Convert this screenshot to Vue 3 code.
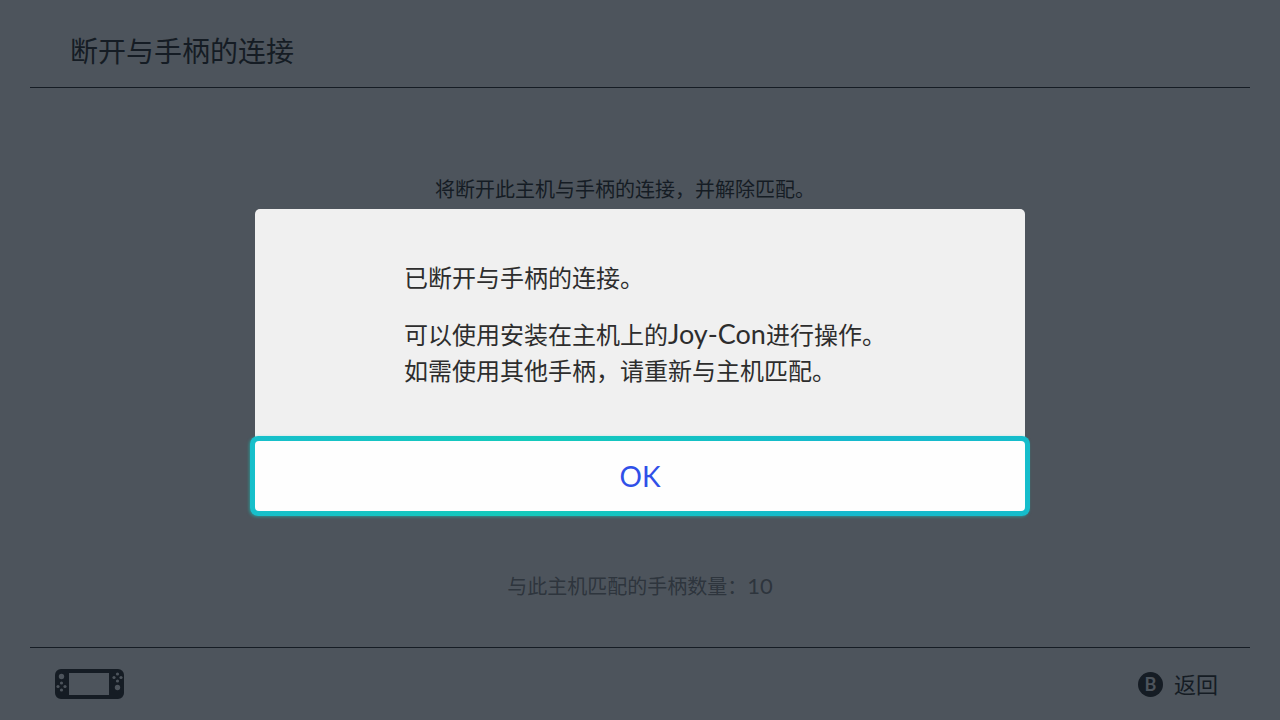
<script setup>
import { ref, onMounted } from 'vue'

const pairedCount = 10
const okButton = ref(null)
onMounted(() => okButton.value.focus())
</script>

<template>
  <div class="screen">
    <header class="top">
      <h1>断开与手柄的连接</h1>
    </header>
    <main class="content">
      <p class="notice">将断开此主机与手柄的连接，并解除匹配。</p>
      <p class="count">与此主机匹配的手柄数量：<span class="number">{{ pairedCount }}</span></p>
    </main>
    <footer class="bottom">
      <svg class="console" viewBox="0 0 70 30" width="70" height="30" aria-hidden="true">
        <path
          fill="#151c24"
          fill-rule="evenodd"
          d="M6 0H63a6 6 0 0 1 6 6V24a6 6 0 0 1-6 6H6a6 6 0 0 1-6-6V6a6 6 0 0 1 6-6ZM14 4V26H54V4Z"
        />
        <g fill="#4d545c">
          <circle cx="6.5" cy="7.5" r="2.7" />
          <circle cx="6.5" cy="14" r="1.6" />
          <circle cx="6.5" cy="21" r="1.6" />
          <circle cx="3" cy="17.5" r="1.6" />
          <circle cx="10" cy="17.5" r="1.6" />
          <circle cx="62.5" cy="18.5" r="2.7" />
          <circle cx="62.5" cy="5" r="1.6" />
          <circle cx="62.5" cy="12" r="1.6" />
          <circle cx="59" cy="8.5" r="1.6" />
          <circle cx="66" cy="8.5" r="1.6" />
        </g>
      </svg>
      <button class="back" type="button"><span class="key">B</span><span class="back-label">返回</span></button>
    </footer>

    <div class="overlay">
      <section class="dialog" role="alertdialog" aria-modal="true" aria-labelledby="dialog-title" aria-describedby="dialog-text">
        <div class="message">
          <p id="dialog-title">已断开与手柄的连接。</p>
          <p id="dialog-text">可以使用安装在主机上的<span class="latin">Joy-Con</span>进行操作。<br />如需使用其他手柄，请重新与主机匹配。</p>
        </div>
        <button ref="okButton" class="ok" type="button"><span class="ok-label">OK</span></button>
      </section>
    </div>
  </div>
</template>

<style>
body {
  background: #4d545c;
}
</style>

<style scoped>
.screen {
  box-sizing: border-box;
  min-height: 100vh;
  padding: 0 30px;
  display: flex;
  flex-direction: column;
  background: #4d545c;
  color: #151c24;
  font-family: "Noto Sans CJK SC", sans-serif;
}

h1,
p {
  margin: 0;
  font-weight: 400;
}

.top {
  padding: 16px 40px 0;
  height: 71px;
  border-bottom: 1px solid #151c24;
}

h1 {
  font-size: 28px;
  line-height: 68px;
}

.content {
  flex: 1;
  display: flex;
  flex-direction: column;
  align-items: center;
  justify-content: space-between;
  padding: 86px 0 46px;
}

.notice,
.count {
  font-size: 20px;
  line-height: 30px;
}

.notice {
  width: 410px;
}

.count {
  color: #2e353d;
}

.number {
  font-family: Lato, sans-serif;
  font-size: 22px;
}

.bottom {
  display: flex;
  align-items: center;
  justify-content: space-between;
  height: 72px;
  padding: 0 32px 0 25px;
  border-top: 1px solid #151c24;
}

.back {
  display: flex;
  align-items: center;
  gap: 11px;
  padding: 0;
  border: 0;
  background: none;
  color: inherit;
  font: 400 22px/32px "Noto Sans CJK SC", sans-serif;
}

.back-label {
  padding-bottom: 2px;
}

.key {
  width: 25px;
  height: 25px;
  border-radius: 50%;
  background: #151c24;
  color: #4d545c;
  font: 700 18px/25px Lato, sans-serif;
  text-align: center;
}

.overlay {
  position: fixed;
  inset: 0;
  display: grid;
  place-items: center;
}

.dialog {
  width: 770px;
  border-radius: 5px;
  background: #f0f0f0;
  color: #2d2d2d;
}

.message {
  padding: 50px 120px 53px 149px;
  font-size: 24px;
  line-height: 36px;
}

.message p + p {
  margin-top: 21px;
}

.latin {
  font-family: Lato, sans-serif;
  font-size: 27px;
  line-height: 1;
}

.ok {
  position: relative;
  display: block;
  width: 100%;
  height: 70px;
  padding: 0;
  border: 0;
  border-radius: 4px;
  outline: none;
  background: #fefefe;
  color: #3050e8;
  font: 400 28px/68px Lato, sans-serif;
}

.ok::before {
  content: "";
  position: absolute;
  inset: -5px;
  z-index: 0;
  border-radius: 8px;
  background: linear-gradient(100deg, #17bfcb 0%, #14cabb 35%, #15b9cd 75%, #15bdcb 100%);
  box-shadow: -1px 1px 3px rgba(20, 200, 190, 0.5);
}

.ok::after {
  content: "";
  position: absolute;
  inset: 0;
  border-radius: 4px;
  background: #fefefe;
}

.ok-label {
  position: relative;
  z-index: 1;
}
</style>
